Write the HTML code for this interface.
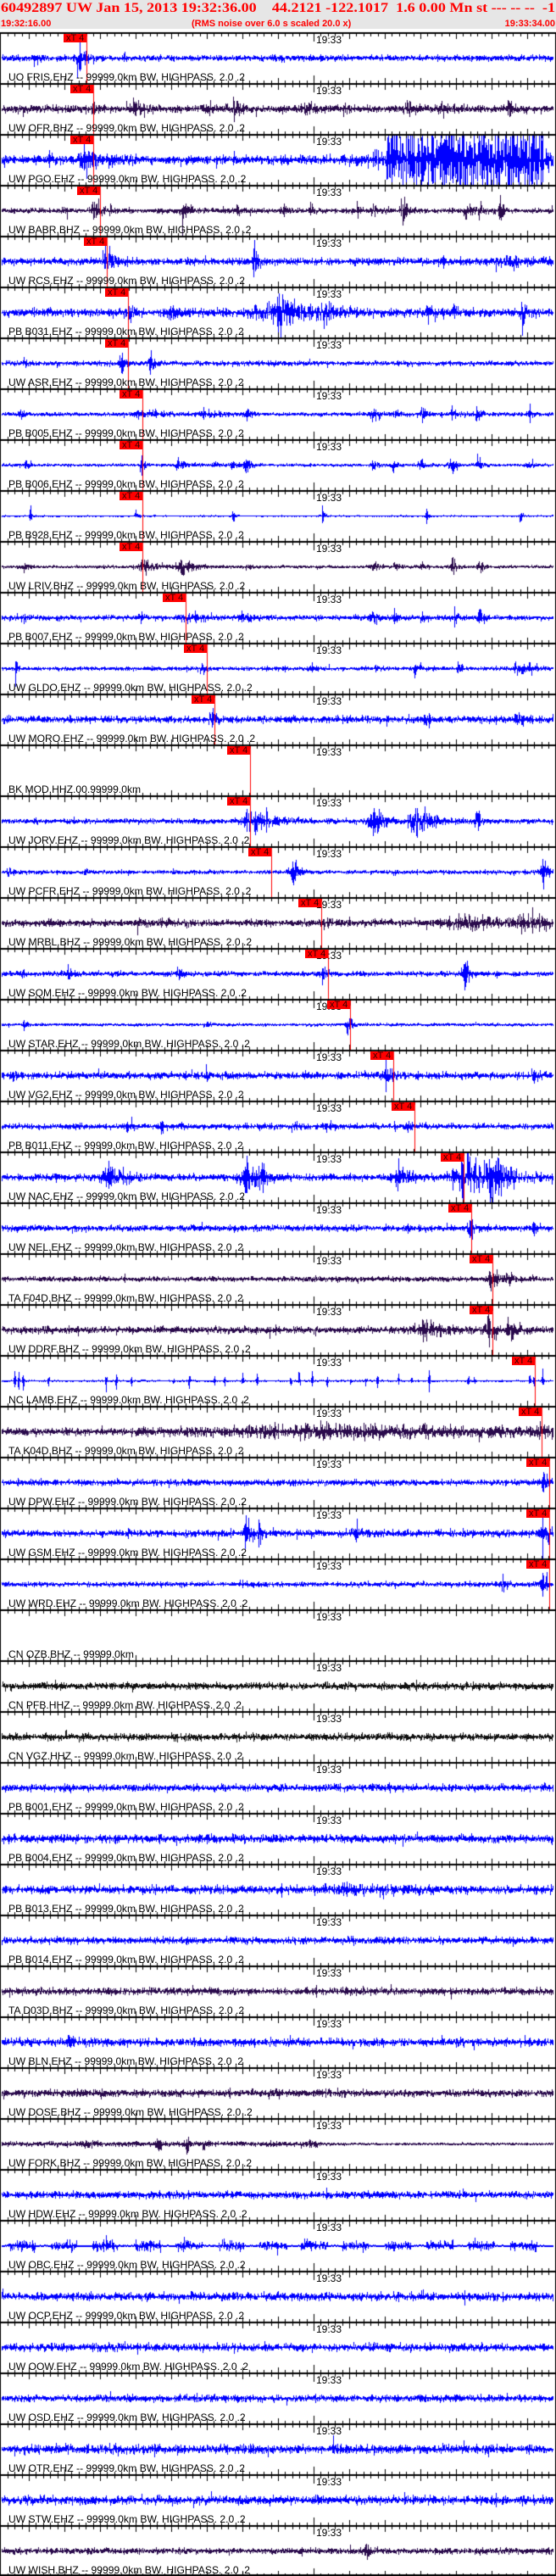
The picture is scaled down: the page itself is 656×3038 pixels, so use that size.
<!DOCTYPE html>
<html><head><meta charset="utf-8">
<style>
html,body{margin:0;padding:0;background:#fff;}
body{width:656px;height:3038px;position:relative;overflow:hidden;}
#hdr{position:absolute;left:0;top:0;width:656px;height:34px;background:#e6e6e6;}
#title{position:absolute;left:1px;top:1px;font:bold 16px "Liberation Serif",serif;color:#f00;white-space:pre;transform-origin:0 0;}
.h2{position:absolute;top:22px;font:bold 11px "Liberation Sans",sans-serif;color:#f00;white-space:pre;}
canvas{position:absolute;left:0;top:0;}
.t{position:absolute;font:12px/12px "Liberation Sans",sans-serif;color:#000;white-space:pre;}
.lab{position:absolute;left:10px;font:12px/12px "Liberation Sans",sans-serif;color:#000;white-space:pre;transform-origin:0 0;}
.mk{position:absolute;width:27px;height:10px;background:#f00;font:11px/10px "Liberation Sans",sans-serif;color:#300;text-indent:3px;white-space:pre;}
</style></head><body>
<div id="hdr"></div>
<div id="title">60492897 UW Jan 15, 2013 19:32:36.00    44.2121 -122.1017  1.6 0.00 Mn st --- -- --  -1</div>
<div class="h2" style="left:1px">19:32:16.00</div>
<div class="h2" style="left:226px">(RMS noise over 6.0 s scaled 20.0 x)</div>
<div class="h2" style="right:1px">19:33:34.00</div>
<canvas id="cv" width="656" height="3038"></canvas>
<div id="txt"></div>
<script>
var B='#0000ff',P='#2a0a4c',K='#111111';
var S=' -- 99999.0km BW. HIGHPASS. 2.0 .2';
var T=[
['UO FRIS.EHZ'+S,B,2.5,[[93,24,5],[40,4,4],[330,3,4]],102],
['UW OFR.BHZ'+S,P,3.2,[[158,11,6],[110,6,4],[245,8,8],[275,7,6],[360,7,8],[480,6,6],[600,6,10],[520,5,8]],110],
['UW PGO.EHZ'+S,B,4,[[100,9,20]],110],
['UW BABR.BHZ'+S,P,2,[[110,26,5],[130,7,4],[215,18,4],[278,8,4],[335,8,4],[365,7,4],[420,8,4],[440,10,4],[474,25,4],[549,12,4],[590,20,3],[565,8,4],[75,5,4]],118],
['UW RCS.EHZ'+S,B,3,[[124,22,6],[300,12,5],[600,4,30]],126],
['PB B031.EHZ'+S,B,3.5,[[150,12,4],[200,6,10],[300,8,15],[330,30,12],[380,8,20],[505,10,4],[535,9,4],[617,18,4]],151],
['UW ASR.EHZ'+S,B,2,[[29,6,3],[143,18,3],[177,10,4]],151],
['PB B005.EHZ'+S,B,1.5,[[25,6,4],[168,5,20],[240,6,10],[290,6,5],[440,6,8],[465,5,4],[497,6,4],[533,8,4],[562,10,4],[624,8,4]],168],
['PB B006.EHZ'+S,B,1,[[30,5,4],[166,10,3],[210,7,8],[252,7,4],[275,7,4],[289,12,4],[440,5,5],[463,7,4],[495,9,4],[532,15,4],[563,9,4],[624,7,4]],168],
['PB B928.EHZ'+S,B,0.4,[[35,10,2],[160,10,2],[274,8,2],[380,11,2],[503,10,2],[613,10,2]],168],
['UW LRIV.BHZ'+S,P,1,[[28,4,4],[168,5,15],[215,7,15],[290,5,5],[440,6,6],[465,5,4],[497,5,4],[533,11,4],[565,10,4]],168],
['PB B007.EHZ'+S,B,2,[[28,5,4],[165,4,4],[220,6,12],[285,6,8],[440,6,6],[465,6,4],[497,5,4],[536,8,4],[565,10,4]],219],
['UW GLDO.EHZ'+S,B,1.5,[[18,6,3],[237,10,4],[367,5,4],[443,4,4],[490,6,4],[540,5,4],[610,5,15],[625,6,4]],244],
['UW MORO.EHZ'+S,B,3,[[248,12,5],[502,10,4],[610,6,5]],253],
['BK MOD.HHZ.00.99999.0km',B,0,[],295,1],
['UW JORV.EHZ'+S,B,2,[[40,5,4],[290,8,5],[300,10,20],[440,16,10],[490,16,15],[562,20,3]],295],
['UW PCFR.EHZ'+S,B,1.5,[[10,5,5],[100,3,3],[345,14,6],[640,12,6]],320],
['UW MRBL.BHZ'+S,P,3,[[160,5,5],[190,4,5],[380,5,10],[545,6,30],[620,10,20]],379],
['UW SQM.EHZ'+S,B,2,[[25,5,4],[80,6,4],[210,5,5],[380,8,5],[547,14,5]],387],
['UW STAR.EHZ'+S,B,1,[[28,7,3],[244,4,4],[410,22,3]],413],
['UW VG2.EHZ'+S,B,3,[[14,6,3],[243,12,2],[455,22,3],[630,6,3]],464],
['PB B011.EHZ'+S,B,2.5,[[150,5,5],[188,8,4],[345,5,4],[385,5,4],[480,7,4]],489],
['UW NAC.EHZ'+S,B,3,[[128,12,15],[290,18,12],[308,12,6],[470,12,10],[545,25,20],[580,20,20]],547],
['UW NEL.EHZ'+S,B,2.5,[[553,20,4],[630,5,5]],556],
['TA F04D.BHZ'+S,P,2,[[580,12,8],[600,8,5]],581],
['UW DDRF.BHZ'+S,P,3,[[500,8,20],[575,20,5],[600,8,8]],581],
['NC LAMB.EHZ'+S,B,0.5,[],631,2],
['TA K04D.BHZ'+S,P,3,[[370,5,300],[638,15,4]],639],
['UW DPW.EHZ'+S,B,2.5,[[640,20,4]],648],
['UW GSM.EHZ'+S,B,3,[[290,15,5],[305,30,2],[420,8,5],[640,22,5]],648],
['UW WRD.EHZ'+S,B,2,[[593,8,4],[640,20,3]],648],
['CN OZB.BHZ -- 99999.0km',B,0,[],0,1],
['CN PFB.HHZ'+S,K,3,[],0],
['CN VGZ.HHZ'+S,K,3,[],0],
['PB B001.EHZ'+S,B,3,[],0],
['PB B004.EHZ'+S,B,3.5,[],0],
['PB B013.EHZ'+S,B,3.5,[[410,2.5,80],[410,2.5,-80]],0],
['PB B014.EHZ'+S,B,3,[],0],
['TA D03D.BHZ'+S,P,3,[],0],
['UW BLN.EHZ'+S,B,3.5,[[80,6,4]],0],
['UW DOSE.BHZ'+S,P,3,[],0],
['UW FORK.BHZ'+S,P,2,[[100,5,5],[185,8,4],[220,9,4],[240,6,4],[365,7,5]],0,3],
['UW HDW.EHZ'+S,B,3,[],0],
['UW OBC.EHZ'+S,B,5,[],0,4],
['UW OCP.EHZ'+S,B,3.5,[],0],
['UW OOW.EHZ'+S,B,3.5,[],0],
['UW OSD.EHZ'+S,B,3,[],0],
['UW OTR.EHZ'+S,B,4,[[393,8,3]],0],
['UW STW.EHZ'+S,B,4,[],0],
['UW WISH.BHZ'+S,P,2.5,[[430,12,3]],0]
];
var seed=12345;function rnd(){seed|=0;seed=seed+0x6D2B79F5|0;var t=Math.imul(seed^seed>>>15,1|seed);t=t+Math.imul(t^t>>>7,61|t)^t;return((t^t>>>14)>>>0)/4294967296;}
function g(){return (rnd()+rnd()+rnd()-1.5)*1.3;}
var c=document.getElementById('cv').getContext('2d');
var txt=document.getElementById('txt');var h='';
var lamb=[17,22,27,57,125,137,155,204,223,253,265,286,303,343,353,368,386,413,432,445,470,485,506,552,560,625,630,640];
var obc=[[10,42],[60,90],[109,140],[158,189],[207,239],[257,287],[306,338],[355,386],[404,434],[454,484],[503,534],[552,583],[602,633]];
for(var i=0;i<50;i++){
 var y0=38+60*i,t=T[i],cy=y0+30;
 if(t[5]!==1){
  c.fillStyle=t[1];
  for(var x=2;x<653;x++){
   var e=t[2];
   if(t[5]==3&&x>380)e=0.8;
   if(t[5]==4){var on=0;for(var k=0;k<obc.length;k++)if(x>=obc[k][0]&&x<=obc[k][1])on=1;e=on?4.5:0.6;}
   if(i==2){e=4+(x>400?(x-400)/12:0);if(x>455)e=30+10*rnd();if(x>640)e=10;}
   for(var k=0;k<t[3].length;k++){var b=t[3][k],d=x-b[0],w=Math.abs(b[2]);
     if(b[2]<0)continue;
     if(d>=0)e+=b[1]*Math.exp(-d/w);else e+=b[1]*Math.exp(d/(w*0.35));}
   if(t[5]==2){for(var k=0;k<lamb.length;k++){var d=Math.abs(x-lamb[k]);if(d<2)e+=10*(d==0?1:0.4);}}
   var a1=Math.abs(g())*e,a2=Math.abs(g())*e;
   if(rnd()<0.04){a1*=1.7;a2*=1.7;}
   a1=Math.min(a1,29);a2=Math.min(a2,29);
   var th=(t[5]==4)?2:1;
   c.fillRect(x,Math.round(cy-a1),1,Math.max(th,Math.round(a1+a2)+1));
  }
 }
 c.fillStyle='#000';c.fillRect(0,y0,656,2);
 for(var s=-44;s<=34;s++){var tx=Math.round(370+s*8.4);if(tx<1||tx>655)continue;
   var L=(s==0)?9:(s%5==0?6:3);
   c.fillRect(tx,y0+2,1,L);c.fillRect(tx,y0+60-L,1,L);}
 h+='<div class="t" style="left:373px;top:'+(y0+3)+'px">19:33</div>';
 h+='<div class="lab" style="top:'+(y0+47)+'px">'+t[0]+'</div>';
 if(t[4]){c.fillStyle='#f00';c.fillRect(t[4],y0+2,1,58);
   h+='<div class="mk" style="left:'+(t[4]-27)+'px;top:'+(y0+2)+'px">xT 4</div>';}
}
c.fillStyle='#000';c.fillRect(0,38,1,3000);c.fillRect(655,38,1,3000);c.fillRect(0,3036,656,2);
txt.innerHTML=h;
var labs=document.querySelectorAll('.lab');var w0=labs[0].getBoundingClientRect().width;var sc=279/w0;
for(var i=0;i<labs.length;i++)labs[i].style.transform='scaleX('+sc+')';
var ti=document.getElementById('title');ti.style.transform='scaleX('+(654/ti.getBoundingClientRect().width)+')';
</script>
</body></html>
